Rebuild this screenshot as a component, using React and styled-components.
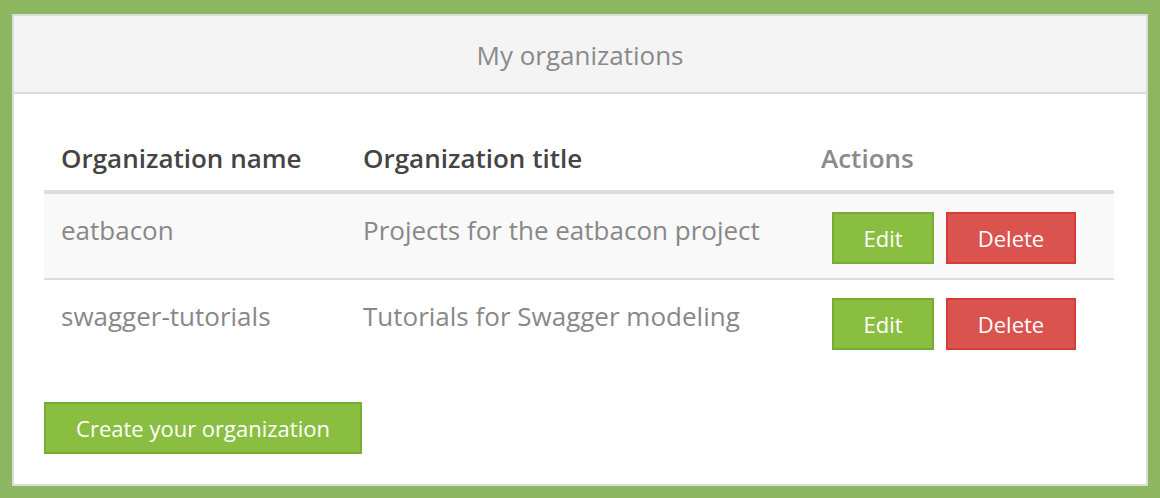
import styled, { createGlobalStyle } from "styled-components";

const Global = createGlobalStyle`
  html, body {
    margin: 0;
    padding: 0;
    background: #8db660;
    font-family: "Open Sans", "Liberation Sans", sans-serif;
  }
  #root {
    padding: 14px 12px 12px;
  }
`;

const Panel = styled.div`
  background: #fff;
  border: 2px solid #dcdcdc;
  height: 472px;
  box-sizing: border-box;
  display: flex;
  flex-direction: column;
  overflow: hidden;
`;

const PanelHeader = styled.div`
  flex-shrink: 0;
  background: #f4f4f4;
  border-bottom: 2px solid #dcdcdc;
  height: 78px;
  box-sizing: border-box;
  display: flex;
  align-items: center;
  justify-content: center;
  color: #8a8a8a;
  font-size: 26px;
  padding-top: 2px;
`;

const PanelBody = styled.div`
  padding: 32px 32px 30px 30px;
`;

const Table = styled.table`
  width: 100%;
  table-layout: fixed;
  border-collapse: collapse;
  font-size: 26px;
`;

const Th = styled.th`
  box-sizing: border-box;
  text-align: left;
  font-weight: 600;
  color: ${(p) => (p.$muted ? "#8a8a8a" : "#444")};
  padding: 17px 17px;
  line-height: 30px;
  border-bottom: 4px solid #dcdcdc;
  width: ${(p) => p.$w || "auto"};
`;

const Row = styled.tr`
  background: ${(p) => (p.$striped ? "#f9f9f9" : "#fff")};
  border-bottom: ${(p) => (p.$last ? "none" : "2px solid #dcdcdc")};
`;

const Td = styled.td`
  color: #888;
  padding: 0 17px;
  height: 84px;
  vertical-align: middle;
  line-height: 30px;
  white-space: nowrap;
`;

const CellText = styled.span`
  display: block;
  transform: translateY(-6px);
`;

const ActionCell = styled.td`
  padding: 4px 28px 0;
  vertical-align: middle;
`;

const Actions = styled.div`
  display: flex;
  gap: 12px;
`;

const Button = styled.button`
  flex-shrink: 0;
  font-family: inherit;
  font-size: 22px;
  color: #fff;
  height: 52px;
  width: ${(p) => p.$w};
  border: 2px solid ${(p) => (p.$danger ? "#d43c38" : "#78ad34")};
  background: ${(p) => (p.$danger ? "#db534f" : "#8abe41")};
  padding: 0;
  cursor: pointer;
`;

const CreateRow = styled.div`
  margin-top: 38px;
`;

const orgs = [
  { name: "eatbacon", title: "Projects for the eatbacon project" },
  { name: "swagger-tutorials", title: "Tutorials for Swagger modeling" },
];

export default function App() {
  return (
    <>
      <Global />
      <Panel>
        <PanelHeader>My organizations</PanelHeader>
        <PanelBody>
          <Table>
            <thead>
              <tr>
                <Th $w="302px">Organization name</Th>
                <Th $w="458px">Organization title</Th>
                <Th $muted>Actions</Th>
              </tr>
            </thead>
            <tbody>
              {orgs.map((o, i) => (
                <Row key={o.name} $striped={i % 2 === 0} $last={i === orgs.length - 1}>
                  <Td>
                    <CellText>{o.name}</CellText>
                  </Td>
                  <Td>
                    <CellText>{o.title}</CellText>
                  </Td>
                  <ActionCell>
                    <Actions>
                      <Button $w="102px">Edit</Button>
                      <Button $w="130px" $danger>
                        Delete
                      </Button>
                    </Actions>
                  </ActionCell>
                </Row>
              ))}
            </tbody>
          </Table>
          <CreateRow>
            <Button $w="318px">Create your organization</Button>
          </CreateRow>
        </PanelBody>
      </Panel>
    </>
  );
}
